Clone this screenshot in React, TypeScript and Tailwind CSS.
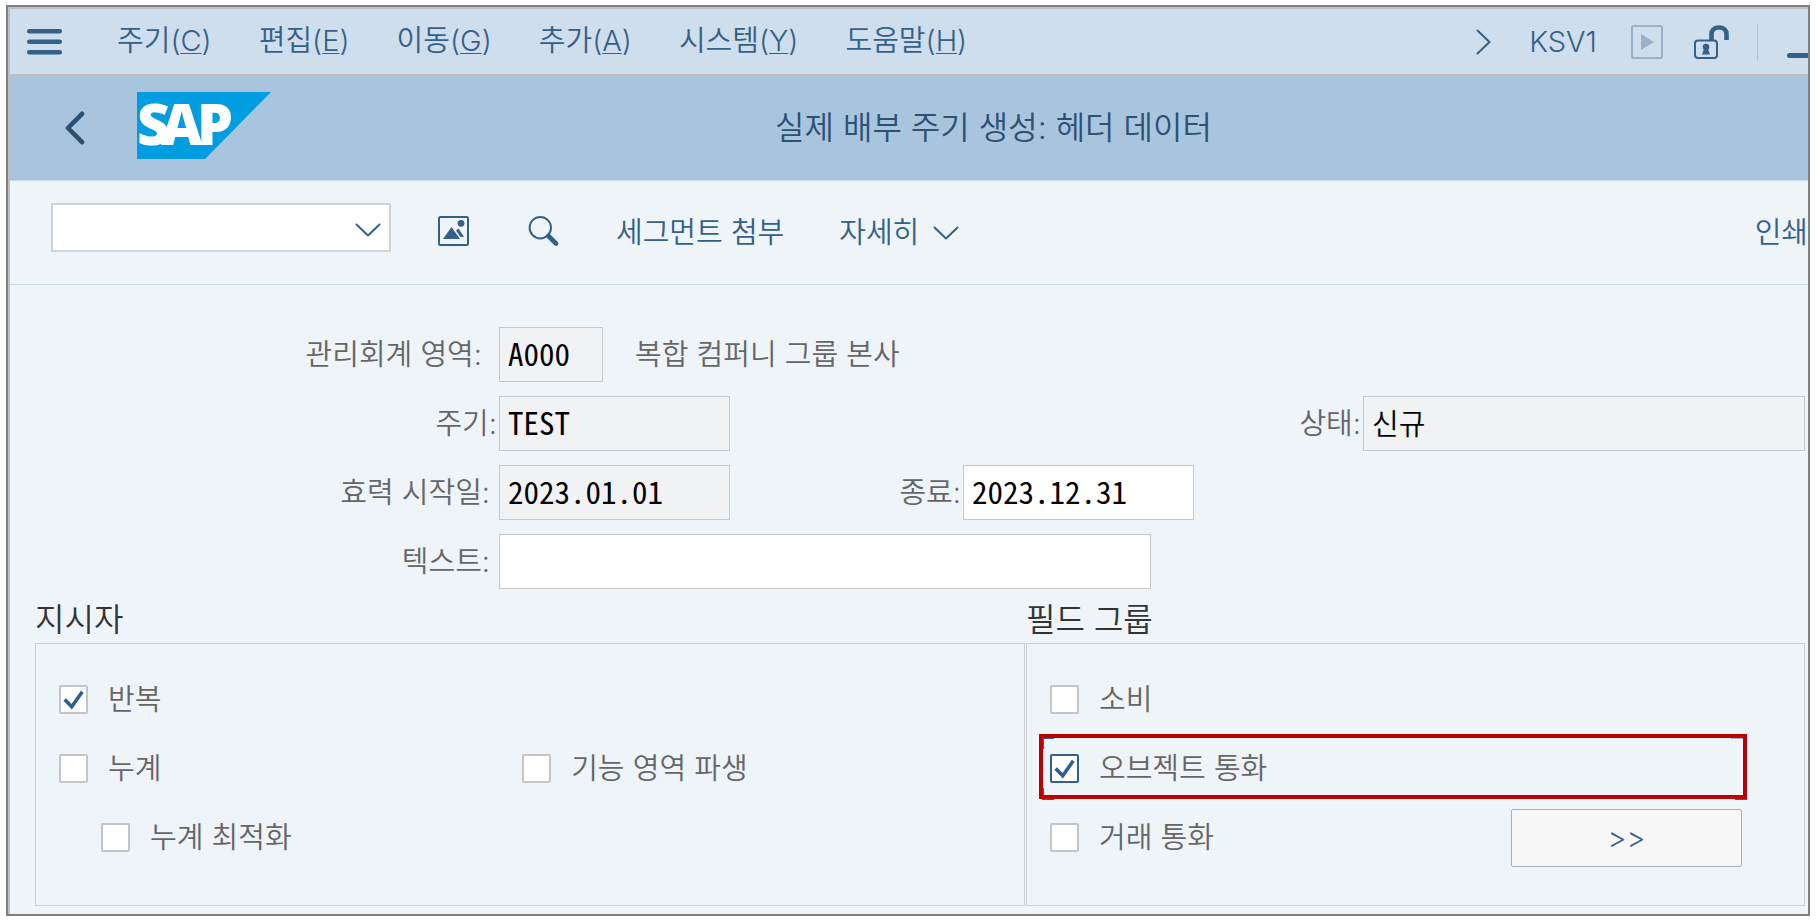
import { useState } from 'react';
import type { ReactNode } from 'react';

const menus = [
  { name: '주기', shortcut: 'C' },
  { name: '편집', shortcut: 'E' },
  { name: '이동', shortcut: 'G' },
  { name: '추가', shortcut: 'A' },
  { name: '시스템', shortcut: 'Y' },
  { name: '도움말', shortcut: 'H' },
];

function MenuIcon() {
  return (
    <svg width="35" height="26" viewBox="0 0 35 26" fill="currentColor">
      <rect width="35" height="4.600" rx="2.300" />
      <rect y="10.500" width="35" height="4.600" rx="2.300" />
      <rect y="21" width="35" height="4.600" rx="2.300" />
    </svg>
  );
}

function BackIcon() {
  return (
    <svg width="20" height="34" viewBox="0 0 20 34" fill="none" stroke="currentColor" strokeWidth="4.6" strokeLinecap="round" strokeLinejoin="round">
      <path d="M17 2.8 3 17l14 14.2" />
    </svg>
  );
}

function ChevronDown() {
  return (
    <svg width="26" height="14" viewBox="0 0 26 14" fill="none" stroke="currentColor" strokeWidth="2" strokeLinecap="round" strokeLinejoin="round">
      <path d="M1.5 1.5 13 12.5l11.5-11" />
    </svg>
  );
}

function ChevronRight() {
  return (
    <svg width="15" height="26" viewBox="0 0 15 26" fill="none" stroke="currentColor" strokeWidth="2" strokeLinecap="round">
      <path d="M1.5 1.5 13.5 13l-12 11.5" />
    </svg>
  );
}

function PlayIcon() {
  return (
    <svg width="32" height="34" viewBox="0 0 32 34">
      <rect x="1" y="1" width="30" height="32" rx="1" fill="none" stroke="currentColor" strokeWidth="2" />
      <path d="M10 9v16l13-8z" fill="currentColor" />
    </svg>
  );
}

function UnlockIcon() {
  return (
    <svg width="35" height="34" viewBox="0 0 35 34" fill="none" stroke="currentColor">
      <rect x="1" y="15.5" width="22" height="17.5" rx="3" strokeWidth="2" />
      <path d="M17.5 15V9a6.5 6.5 0 0 1 6.5-6.5h2A6.5 6.5 0 0 1 32.500 9v6" strokeWidth="4.6" />
      <circle cx="12" cy="22" r="3.3" fill="currentColor" stroke="none" />
      <path d="M10.500 23h3l2.500 6.500H8z" fill="currentColor" stroke="none" />
    </svg>
  );
}

function ImageIcon() {
  return (
    <svg width="31" height="30" viewBox="0 0 31 30">
      <rect x="1" y="1" width="29" height="28" rx="1.5" fill="none" stroke="currentColor" strokeWidth="2" />
      <path d="M5 23 13.500 11l8.500 12z" fill="currentColor" />
      <path d="m18 14.500 2.500-2L26 21h-3.500z" fill="currentColor" />
      <circle cx="23" cy="7.300" r="3.400" fill="currentColor" />
    </svg>
  );
}

function SearchIcon() {
  return (
    <svg width="31" height="30" viewBox="0 0 31 30" fill="none" stroke="currentColor">
      <circle cx="12.300" cy="11.700" r="10.700" strokeWidth="2" />
      <path d="m20.500 20 7.500 7.500" strokeWidth="4.600" strokeLinecap="round" />
    </svg>
  );
}

function SapLogo() {
  return (
    <svg className="overflow-visible" width="134" height="67" viewBox="0 0 134 67" role="img" aria-label="SAP">
      <path d="M0 0h134L68 67H0z" fill="#009de0" />
      <text x="0 24 60" y="53" className="fill-white font-['Noto_Sans'] text-[57px] font-black">
        SAP
      </text>
    </svg>
  );
}

interface FieldProps {
  id: string;
  label: string;
  labelClass: string;
  inputClass: string;
  value: string;
  readOnly?: boolean;
}

function Field({ id, label, labelClass, inputClass, value, readOnly }: FieldProps) {
  return (
    <>
      <label htmlFor={id} className={`shrink-0 text-right ${labelClass}`}>
        {label}:
      </label>
      <input
        id={id}
        type="text"
        defaultValue={value}
        readOnly={readOnly}
        className={`h-[55px] min-w-0 border border-[#c6c8ca] px-2 pb-1 text-black outline-none ${
          readOnly ? 'bg-[#f1f2f4]' : 'bg-white'
        } ${inputClass}`}
      />
    </>
  );
}

interface CheckProps {
  label: string;
  checked?: boolean;
  focused?: boolean;
}

function Check({ label, checked = false, focused = false }: CheckProps) {
  const [on, setOn] = useState(checked);

  return (
    <label className="flex items-center gap-5">
      <span className="relative size-[29px]">
        <input
          type="checkbox"
          checked={on}
          onChange={() => setOn(!on)}
          className={`block size-[29px] appearance-none rounded-xs border-2 bg-white outline-none ${
            focused ? 'border-[#346187]' : 'border-[#c3c5c8]'
          }`}
        />
        {on && (
          <svg className="pointer-events-none absolute inset-0 text-[#2b6090]" width="29" height="29" viewBox="0 0 28 28" fill="none" stroke="currentColor" strokeWidth="3.400">
            <path d="m5.500 14 6.800 7L22.500 6.500" />
          </svg>
        )}
      </span>
      {label}
    </label>
  );
}

function Panel({ title, children }: { title: string; children: ReactNode }) {
  return (
    <section className="flex flex-col">
      <h2 className="h-[54px] pt-1.5 text-[32px] leading-[50px] text-[#333333]">{title}</h2>
      <div className="flex-1 border border-[#cdd0d3] pt-[21px]">{children}</div>
    </section>
  );
}

export default function App() {
  return (
    <div className="flex min-h-screen bg-white px-1.5 pt-[5px] pb-1 font-['Inter','Noto_Sans_CJK_KR',sans-serif] text-[29px] leading-9 font-[350] whitespace-nowrap text-[#666666]">
      <div className="flex min-w-0 flex-1 overflow-hidden border-2 border-[#7f7f7f]">
        <div className="flex min-w-0 flex-1 flex-col border-t-2 border-l-2 border-[#bfbfbf] bg-[#eff4f8]">
          {/* Menu bar */}
          <nav className="flex h-[67px] items-center border-b-2 border-[#bfbfbf] bg-[#cfdeed] pl-[17px] text-[#346187]">
            <button aria-label="메뉴">
              <MenuIcon />
            </button>
            <ul className="flex gap-[47px] pb-0.5 pl-[55px]">
              {menus.map((menu) => (
                <li key={menu.shortcut}>
                  <button>
                    {menu.name}(<span className="underline decoration-1 underline-offset-2">{menu.shortcut}</span>)
                  </button>
                </li>
              ))}
            </ul>
            <div className="ml-auto flex items-center">
              <button aria-label="다음">
                <ChevronRight />
              </button>
              <span className="pl-[38px]">KSV1</span>
              <button aria-label="실행" className="pl-[34px] text-[#9bb1c8]">
                <PlayIcon />
              </button>
              <button aria-label="잠금 해제" className="pl-[31px]">
                <UnlockIcon />
              </button>
              <span className="ml-7 h-9 w-px bg-[#b9c0c8]" />
              <button aria-label="최소화" className="flex h-8 items-end pl-[29px]">
                <span className="h-[5px] w-[21px] rounded-l-full bg-[#346187]" />
              </button>
            </div>
          </nav>

          {/* Title bar */}
          <header className="flex h-[105px] items-center border-b border-[#c9ddec] bg-[#a9c5de] pl-[55px] text-[#2b5173]">
            <button aria-label="뒤로">
              <BackIcon />
            </button>
            <div className="pb-1.5 pl-[52px]">
              <SapLogo />
            </div>
            <h1 className="flex-1 pr-[92px] text-center text-[32px]">실제 배부 주기 생성: 헤더 데이터</h1>
          </header>

          {/* Toolbar */}
          <div className="flex h-[104px] items-center border-b border-[#cbdceb] pl-[41px] text-[#346187]">
            <div className="relative mb-2.5">
              <select aria-label="명령" className="block h-[49px] w-[340px] appearance-none border-2 border-[#d0d3d6] bg-white px-2 outline-none">
                <option></option>
              </select>
              <span className="pointer-events-none absolute inset-y-0 right-2.5 flex items-center pt-1">
                <ChevronDown />
              </span>
            </div>
            <button aria-label="이미지" className="pb-1 pl-[47px]">
              <ImageIcon />
            </button>
            <button aria-label="검색" className="pb-1 pl-[59px]">
              <SearchIcon />
            </button>
            <button className="pl-[57px]">세그먼트 첨부</button>
            <button className="flex items-center gap-3.5 pl-[55px]">
              자세히 <ChevronDown />
            </button>
            <button className="ml-auto">인쇄</button>
          </div>

          <main className="flex flex-1 flex-col pt-[42px] pr-[3px] pb-2 pl-[25px]">
            <form className="flex flex-col gap-3.5">
              <div className="flex items-center">
                <Field id="area" label="관리회계 영역" labelClass="w-[464px] pr-[17px]" inputClass="w-[104px] font-['Noto_Sans_Mono_CJK_KR',monospace] text-[31px]" value="A000" readOnly />
                <span className="pl-8">복합 컴퍼니 그룹 본사</span>
              </div>
              <div className="flex items-center">
                <Field id="cycle" label="주기" labelClass="w-[464px] pr-0.5" inputClass="w-[231px] font-['Noto_Sans_Mono_CJK_KR',monospace] text-[31px]" value="TEST" readOnly />
                <Field id="status" label="상태" labelClass="w-[633px] pr-0.5" inputClass="flex-1" value="신규" readOnly />
              </div>
              <div className="flex items-center">
                <Field id="from" label="효력 시작일" labelClass="w-[464px] pr-[9px]" inputClass="w-[231px] font-['Noto_Sans_Mono_CJK_KR',monospace] text-[31px]" value="2023.01.01" readOnly />
                <Field id="to" label="종료" labelClass="w-[233px] pr-0.5" inputClass="w-[231px] font-['Noto_Sans_Mono_CJK_KR',monospace] text-[31px]" value="2023.12.31" />
              </div>
              <div className="flex items-center">
                <Field id="text" label="텍스트" labelClass="w-[464px] pr-[9px]" inputClass="w-[652px]" value="" />
              </div>
            </form>

            <div className="grid flex-1 grid-cols-[990fr_779fr] gap-px">
              <Panel title="지시자">
                <div className="flex h-[69px] items-center pl-[23px]">
                  <Check label="반복" checked />
                </div>
                <div className="grid h-[69px] grid-cols-[48%_1fr] items-center pl-[23px]">
                  <Check label="누계" />
                  <Check label="기능 영역 파생" />
                </div>
                <div className="flex h-[69px] items-center pl-[65px]">
                  <Check label="누계 최적화" />
                </div>
              </Panel>

              <Panel title="필드 그룹">
                <div className="flex h-[69px] items-center pl-[23px]">
                  <Check label="소비" />
                </div>
                <div className="relative flex h-[69px] items-center pl-[23px]">
                  <Check label="오브젝트 통화" checked focused />
                  {/* focus brackets around the selected row */}
                  <span className="pointer-events-none absolute top-[3px] right-[57px] bottom-[3px] left-[15px] flex flex-col justify-between">
                    <span className="flex justify-between">
                      <span className="h-3 w-3 border-t-2 border-l-2 border-[#346187]" />
                      <span className="h-3 w-4 border-t-2 border-[#9fb4c8]" />
                    </span>
                    <span className="flex justify-between">
                      <span className="h-3 w-3 border-b border-l-2 border-[#346187]" />
                      <span className="h-3 w-3 border-b border-[#346187]" />
                    </span>
                  </span>
                  <span className="pointer-events-none absolute top-0 right-[57px] bottom-1 left-3 border-4 border-[#c00000]" />
                </div>
                <div className="flex h-[69px] items-center justify-between pr-[62px] pl-[23px]">
                  <Check label="거래 통화" />
                  <button className="h-[58px] w-[231px] rounded-xs border border-[#adb0b3] bg-[#f7f7f7] text-[#346187]">&gt;&gt;</button>
                </div>
              </Panel>
            </div>
          </main>
        </div>
      </div>
    </div>
  );
}
